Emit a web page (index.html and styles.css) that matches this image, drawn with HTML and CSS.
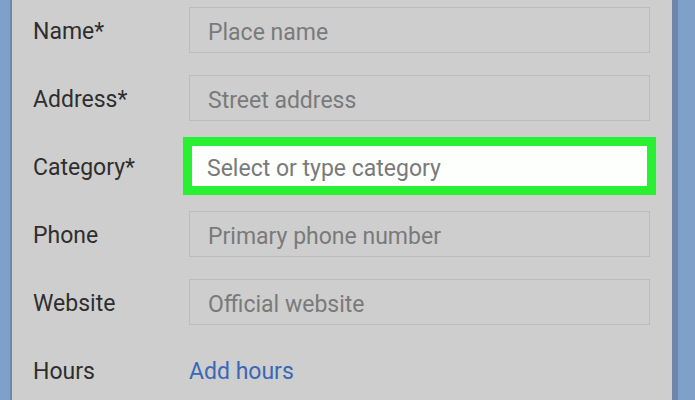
FILE: index.html
```html
<!DOCTYPE html>
<html>
<head>
<meta charset="utf-8">
<link rel="stylesheet" href="styles.css">
</head>
<body>
<div class="screen">
  <div class="edge-left"></div>
  <div class="panel">
    <div class="form">
      <div class="label">Name*</div>
      <div class="field"><span class="ph">Place name</span></div>
      <div class="label">Address*</div>
      <div class="field"><span class="ph">Street address</span></div>
      <div class="label">Category*</div>
      <div class="field highlight"><span class="ph">Select or type category</span></div>
      <div class="label">Phone</div>
      <div class="field"><span class="ph">Primary phone number</span></div>
      <div class="label">Website</div>
      <div class="field"><span class="ph">Official website</span></div>
      <div class="label">Hours</div>
      <div class="link">Add hours</div>
    </div>
  </div>
  <div class="edge-right"></div>
</div>
</body>
</html>
```
FILE: styles.css
```css
html, body {
  margin: 0;
  padding: 0;
  width: 695px;
  height: 400px;
  overflow: hidden;
  background: #7fa0c9;
  font-family: Roboto, "Liberation Sans", sans-serif;
}
.screen {
  display: flex;
  height: 400px;
}
.edge-left {
  width: 10px;
  background: #7fa0c9;
  border-right: 2px solid #6d87ad;
}
.panel {
  width: 660px;
  background: #cecece;
  overflow: hidden;
}
.edge-right {
  width: 6px;
  background: #6e86aa;
}
.form {
  display: grid;
  grid-template-columns: 156px 461px;
  grid-template-rows: repeat(6, 68px);
  align-items: center;
  padding-left: 21px;
  margin-top: -4px;
}
.label {
  font-size: 23px;
  color: #2e2e2e;
  padding-top: 3px;
}
.field {
  height: 44px;
  border: 1px solid #bcbcbc;
  display: flex;
  align-items: center;
  padding-left: 18px;
  box-sizing: content-box;
}
.ph {
  font-size: 23px;
  color: #7a7a7a;
  padding-top: 4px;
}
.field.highlight {
  margin-left: -6px;
  margin-right: -6px;
  height: 40px;
  border: 9px solid #2af034;
  background: #fdfffd;
  padding-left: 15px;
  box-shadow: 0 0 1px #8ef48f;
}
.link {
  font-size: 23px;
  color: #3b67b6;
  padding-top: 3px;
}
```
